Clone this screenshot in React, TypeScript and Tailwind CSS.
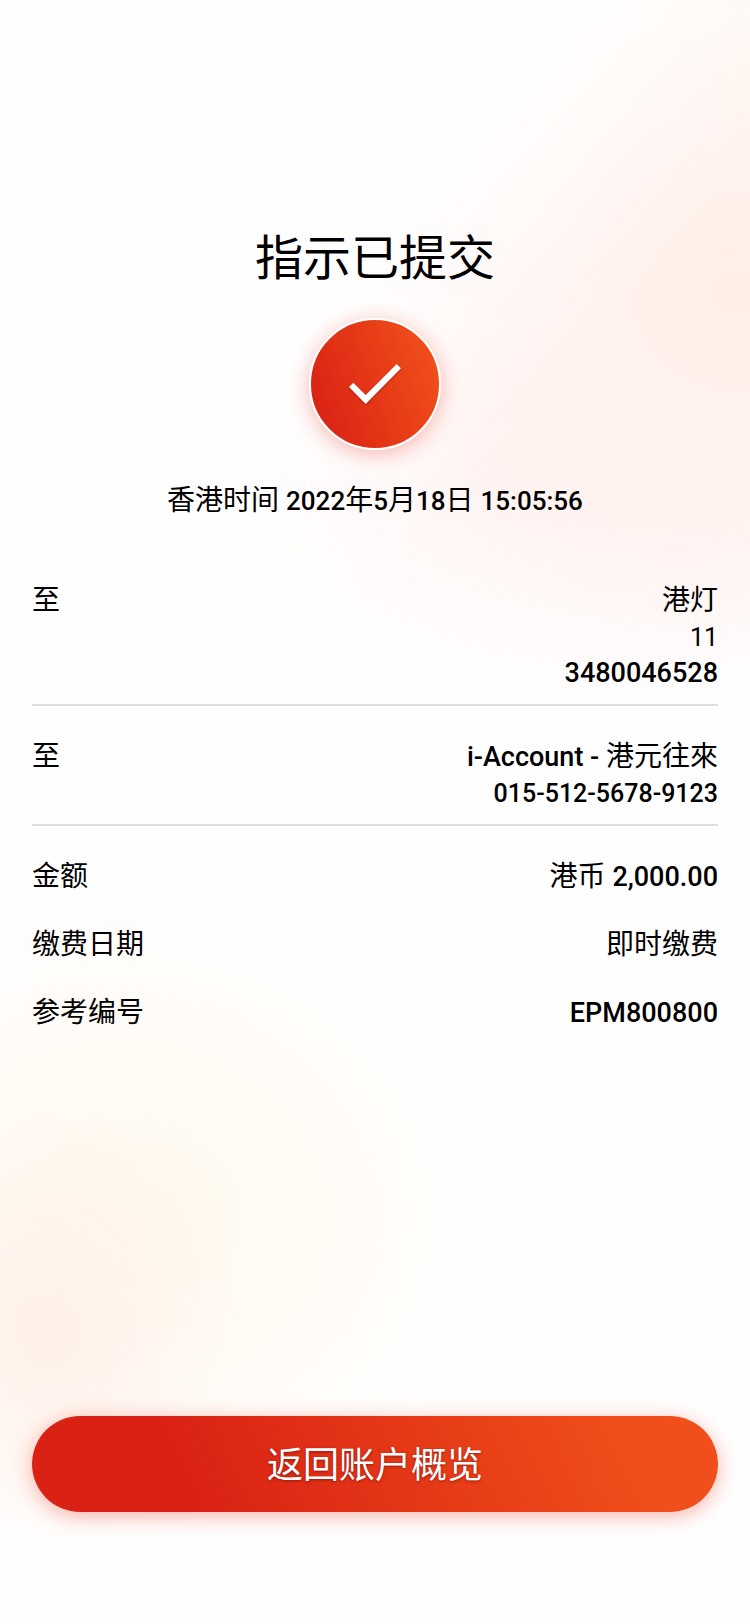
import type { ReactNode } from "react";
import clsx from "clsx";

type Line = {
  text?: string;
  latin?: string;
  latinFirst?: boolean;
  light?: boolean;
  small?: boolean;
};

type Detail = {
  label: string;
  lines: Line[];
  divider?: boolean;
};

const details: Detail[] = [
  {
    label: "至",
    lines: [{ text: "港灯" }, { latin: "11", light: true, small: true }, { latin: "3480046528" }],
    divider: true,
  },
  {
    label: "至",
    lines: [
      { latin: "i-Account - ", text: "港元往來", latinFirst: true },
      { latin: "015-512-5678-9123", small: true },
    ],
    divider: true,
  },
  { label: "金额", lines: [{ text: "港币 ", latin: "2,000.00" }] },
  { label: "缴费日期", lines: [{ text: "即时缴费" }] },
  { label: "参考编号", lines: [{ latin: "EPM800800" }] },
];

type LatinProps = {
  children: ReactNode;
  light?: boolean;
  small?: boolean;
};

function Latin({ children, light, small }: LatinProps) {
  return (
    <span
      className={clsx(
        small ? "text-[25px]" : "text-[27px]",
        light ? "font-normal" : "font-medium"
      )}
    >
      {children}
    </span>
  );
}

function SuccessBadge() {
  return (
    <div className="mt-[26px] size-[132px] rounded-full border-2 border-white bg-[linear-gradient(70deg,#da2114_8%,#f04e1a_88%)] bg-origin-border shadow-[0_4px_20px_rgba(226,40,20,0.32)]">
      <svg viewBox="2 2 128 128" className="size-full" role="img" aria-label="成功">
        <path
          d="M40 69 L44.3 64.7 L56.7 77 L87.7 46 L92 50.3 L56.7 86 Z"
          fill="#fff"
          className="drop-shadow-[0_1px_1px_rgba(90,0,0,0.4)]"
        />
      </svg>
    </div>
  );
}

function DetailRow({ label, lines, divider }: Detail) {
  return (
    <div
      className={clsx(
        "flex justify-between gap-8 pt-8",
        divider && "border-b-2 border-[#dcdcdc] pb-3.5"
      )}
    >
      <dt className="h-9">{label}</dt>
      <dd className="text-right">
        {lines.map((line, i) => (
          <p key={i} className="h-9">
            {!line.latinFirst && line.text}
            {line.latin && (
              <Latin light={line.light} small={line.small}>
                {line.latin}
              </Latin>
            )}
            {line.latinFirst && line.text}
          </p>
        ))}
      </dd>
    </div>
  );
}

export default function App() {
  return (
    <main
      lang="zh-CN"
      className="flex min-h-screen flex-col bg-[#fffefe] bg-[linear-gradient(130deg,#fffefe_26%,transparent_42%),radial-gradient(ellipse_50%_22%_at_98%_18%,#ffeee6_0%,#fff2ee_45%,transparent_100%),radial-gradient(ellipse_62%_19%_at_84%_25%,#ffeeec_0%,transparent_100%),radial-gradient(ellipse_60%_22%_at_100%_6%,#fff8ee_0%,transparent_100%),radial-gradient(ellipse_26%_14%_at_6%_82%,#fff0e9_0%,transparent_100%),radial-gradient(ellipse_50%_20%_at_16%_75%,#fff8ec_0%,transparent_100%)] px-8 pt-[226px] pb-28 font-[Roboto,'Noto_Sans_CJK_SC',sans-serif] text-[28px] leading-[38px] text-black"
    >
      <section className="flex flex-col items-center">
        <h1 className="text-5xl leading-[66px]">指示已提交</h1>
        <SuccessBadge />
        <p className="mt-8 text-center">
          香港时间{" "}
          <time dateTime="2022-05-18T15:05:56+08:00">
            <span className="text-[26px] font-medium">2022</span>年
            <span className="text-[26px] font-medium">5</span>月
            <span className="text-[26px] font-medium">18</span>日{" "}
            <span className="text-[26px] font-medium">15:05:56</span>
          </time>
        </p>
      </section>

      <dl className="mt-[30px] mb-16">
        {details.map((detail, i) => (
          <DetailRow key={i} {...detail} />
        ))}
      </dl>

      <button
        type="button"
        className="mt-auto h-24 w-full cursor-pointer rounded-full bg-[linear-gradient(65deg,#d92114_22%,#f04e1a_86%)] pt-1 text-4xl text-white shadow-[0_4px_20px_rgba(226,40,20,0.35)] text-shadow-[0_1px_3px_rgba(90,0,0,0.55)]"
      >
        返回账户概览
      </button>
    </main>
  );
}
